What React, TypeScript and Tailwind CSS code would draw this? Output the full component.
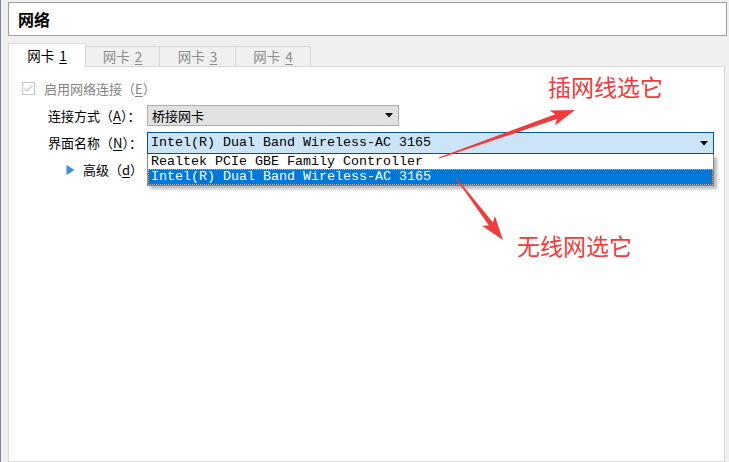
const cjk = "font-['Noto_Sans_CJK_SC','Microsoft_YaHei',sans-serif]";
const mono = "font-['Liberation_Mono','Courier_New',monospace]";

function Tab({ label, digit, active, width }: { label: string; digit: string; active?: boolean; width: string }) {
  if (active) {
    return (
      <div className={`relative z-10 -mb-px h-[24px] ${width} flex items-center justify-center border border-b-0 border-[#d9d9d9] bg-white text-black`}>
        {label} <span className="ml-[5px] underline underline-offset-2">{digit}</span>
      </div>
    );
  }
  return (
    <div className={`h-[20px] ${width} flex items-center justify-center border border-l-0 border-b-0 border-[#d9d9d9] bg-[#f0f0f0] text-[#8d8d8d]`}>
      {label} <span className="ml-[5px] underline underline-offset-2">{digit}</span>
    </div>
  );
}

function Caret() {
  return (
    <svg width="8" height="5" viewBox="0 0 8 5">
      <path d="M0 0 H8 L4 4.5 Z" fill="#000" />
    </svg>
  );
}

export default function App() {
  return (
    <div className={`relative w-[729px] h-[462px] overflow-hidden bg-[#f0f0f0] border-l border-[#7d8494] ${cjk} text-[13px] text-black`}>
      <div className="flex h-full flex-col pl-[7px] pr-[2px] pt-[2px]">
        <div className="flex h-[34px] items-center border border-[#a0a0a0] bg-white pl-[9px] text-[16px] font-bold">
          网络
        </div>

        <div className="mt-[7px] flex h-[23px] items-end text-[13.5px]">
          <Tab label="网卡" digit="1" active width="w-[78px]" />
          <Tab label="网卡" digit="2" width="w-[74px]" />
          <Tab label="网卡" digit="3" width="w-[76px]" />
          <Tab label="网卡" digit="4" width="w-[75px]" />
        </div>

        <div className="mr-[2px] flex-1 border border-[#d9d9d9] bg-white pl-[13px] pt-[15px]">
          <div className="flex h-[13px] items-center whitespace-nowrap">
            <svg className="shrink-0" width="13" height="13" viewBox="0 0 13 13">
              <rect x="0.5" y="0.5" width="12" height="12" fill="#fff" stroke="#c4c4c4" />
              <path d="M2.5 6.5 L5 9 L10.5 3.5" fill="none" stroke="#c4c4c4" strokeWidth="1.2" />
            </svg>
            <span className="ml-[9px] text-[#838383]">
              启用网络连接（<span className="underline underline-offset-2">E</span>）
            </span>
          </div>

          <div className="mt-[10px] flex h-[21px] items-center whitespace-nowrap">
            <div className="ml-[26px] w-[99px] shrink-0">
              连接方式（<span className="underline underline-offset-2">A</span>）：
            </div>
            <div className="flex h-[21px] w-[252px] shrink-0 items-center justify-between border border-[#adadad] bg-[#e1e1e1] pl-[4px] pr-[5px]">
              <span>桥接网卡</span>
              <Caret />
            </div>
          </div>

          <div className="mt-[6px] flex h-[22px] items-center whitespace-nowrap">
            <div className="ml-[26px] w-[99px] shrink-0">
              界面名称（<span className="underline underline-offset-2">N</span>）：
            </div>
            <div className="relative w-[567px] shrink-0">
              <div className="flex h-[22px] items-center justify-between border border-[#005499] bg-[#cce4f7] pl-[3px] pr-[5px]">
                <span className={`${mono} text-[13.33px]`}>Intel(R) Dual Band Wireless-AC 3165</span>
                <Caret />
              </div>
              <div className={`absolute left-0 top-full z-20 w-full border border-[#828790] border-t-0 bg-white shadow-[3px_3px_3px_rgba(0,0,0,0.28)] ${mono} text-[13.33px]`}>
                <div className="flex h-[15px] items-center pl-[3px]">Realtek PCIe GBE Family Controller</div>
                <div className="flex h-[16px] items-center border border-dotted border-[#f0a060] bg-[#0078d7] pl-[2px] text-white">
                  Intel(R) Dual Band Wireless-AC 3165
                </div>
              </div>
            </div>
          </div>

          <div className="mt-[8px] flex h-[16px] items-center whitespace-nowrap">
            <svg className="ml-[44px] shrink-0" width="9" height="10" viewBox="0 0 9 10">
              <path d="M0.5 0 L8.5 5 L0.5 10 Z" fill="#3d8ee0" />
            </svg>
            <span className="ml-[8px]">
              高级（<span className="underline underline-offset-2">d</span>）
            </span>
          </div>
        </div>
      </div>

      <svg className="pointer-events-none absolute left-0 top-0 z-30" width="729" height="462">
        <polygon
          points="438.2,158.5 555.9,119.1 554,125.5 574,110 548.6,110.5 554.3,114.3 437.8,157.5"
          fill="#ef3b3b"
        />
        <polygon
          points="454.6,178.3 487.9,225.6 481.1,225.7 502,240 493.9,216.1 491.9,222.6 455.4,177.7"
          fill="#ef3b3b"
        />
      </svg>
      <div className="pointer-events-none absolute left-[547px] top-[74px] z-30 text-[23px] leading-[24px] text-[#ef3b3b]">插网线选它</div>
      <div className="pointer-events-none absolute left-[516px] top-[233px] z-30 text-[23px] leading-[24px] text-[#ef3b3b]">无线网选它</div>
    </div>
  );
}
